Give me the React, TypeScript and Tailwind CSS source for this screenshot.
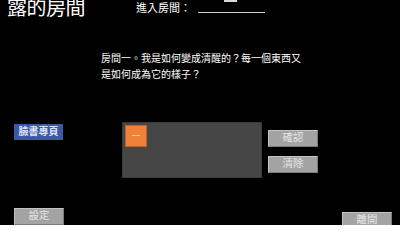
import React from 'react'

const font = { fontFamily: '"Liberation Serif", "Noto Sans CJK TC", serif' }

function GrayButton({ label, className = '' }: { label: string; className?: string }) {
  return (
    <button
      type="button"
      className={`flex h-[17px] w-[50px] items-center justify-center border border-[#c4c4c4] border-b-[#7a7a7a] border-r-[#7a7a7a] bg-[#a3a3a3] text-[10.5px] leading-none text-[#e6e6e6] ${className}`}
    >
      {label}
    </button>
  )
}

export default function App() {
  return (
    <div className="flex h-[225px] w-[400px] flex-col overflow-hidden bg-black text-white" style={font}>
      {/* header */}
      <div className="flex h-[20px] shrink-0 items-start">
        <h1 className="ml-[7px] mt-[-2px] text-[20px] font-normal leading-[20px] tracking-[-0.5px]">露的房間</h1>
        <span className="ml-[51px] mt-[3px] text-[11px] leading-[11px]">進入房間：</span>
        <div className="ml-[7px] flex w-[67px] flex-col">
          <div className="ml-[26px] h-[2px] w-[13px] bg-[#d8d8d8]" />
          <div className="mt-[10px] h-px w-full bg-[#cfcfcf]" />
        </div>
      </div>

      {/* story text */}
      <p className="ml-[101px] mt-[31px] w-[205px] text-[10px] leading-[16px]">
        房間一。我是如何變成清醒的？每一個東西又是如何成為它的樣子？
      </p>

      {/* middle row */}
      <div className="mt-[39px] flex items-start">
        <button
          type="button"
          className="ml-[14px] mt-[2px] flex h-[16px] w-[49px] items-center justify-center bg-[#3b58a6] text-[10px] font-bold leading-none text-[#dfe4f2]"
        >
          臉書專頁
        </button>
        <div className="ml-[59px] h-[56px] w-[140px] border border-[#3a3a3a] bg-[#464646] p-[2px]">
          <div className="flex h-[22px] w-[22px] items-center justify-center border border-[#b8612a] bg-[#ef8238] text-[9px] leading-none text-[#f7d2b4]">
            一
          </div>
        </div>
        <div className="ml-[6px] mt-[8px] flex flex-col gap-[9px]">
          <GrayButton label="確認" />
          <GrayButton label="清除" />
        </div>
      </div>

      {/* footer */}
      <div className="mt-[30px] flex items-start justify-between">
        <GrayButton label="設定" className="ml-[14px] w-[49px]" />
        <GrayButton label="離開" className="mr-[8px] mt-[4px] w-[49px]" />
      </div>
    </div>
  )
}
